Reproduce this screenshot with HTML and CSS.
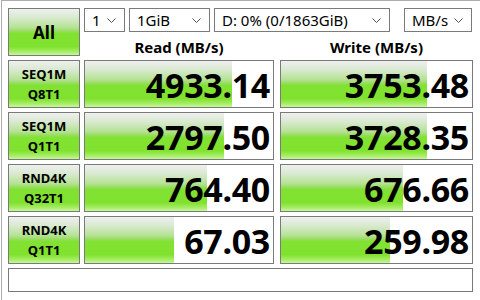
FILE: index.html
```
<!DOCTYPE html>
<html>
<head>
<meta charset="utf-8">
<link rel="stylesheet" href="styles.css">
</head>
<body>
<div class="app">
  <button class="btn all">All</button>
  <div class="toolbar">
    <div class="select w-count"><span>1</span><svg class="chev" width="9" height="5" viewBox="0 0 9 5"><path d="M0.5 0.5 L4.5 4.5 L8.5 0.5" fill="none" stroke="#505050" stroke-width="1"/></svg></div>
    <div class="select w-size"><span>1GiB</span><svg class="chev" width="9" height="5" viewBox="0 0 9 5"><path d="M0.5 0.5 L4.5 4.5 L8.5 0.5" fill="none" stroke="#505050" stroke-width="1"/></svg></div>
    <div class="select w-drive"><span>D: 0% (0/1863GiB)</span><svg class="chev" width="9" height="5" viewBox="0 0 9 5"><path d="M0.5 0.5 L4.5 4.5 L8.5 0.5" fill="none" stroke="#505050" stroke-width="1"/></svg></div>
    <div class="select w-unit"><span>MB/s</span><svg class="chev" width="9" height="5" viewBox="0 0 9 5"><path d="M0.5 0.5 L4.5 4.5 L8.5 0.5" fill="none" stroke="#505050" stroke-width="1"/></svg></div>
  </div>
  <div class="head">Read (MB/s)</div>
  <div class="head write">Write (MB/s)</div>

  <button class="btn label">SEQ1M<br>Q8T1</button>
  <div class="meter"><div class="fill" style="width:78.2%"></div><span class="val">4933.14</span></div>
  <div class="meter write"><div class="fill" style="width:76.2%"></div><span class="val">3753.48</span></div>

  <button class="btn label">SEQ1M<br>Q1T1</button>
  <div class="meter"><div class="fill" style="width:74.1%"></div><span class="val">2797.50</span></div>
  <div class="meter write"><div class="fill" style="width:76.2%"></div><span class="val">3728.35</span></div>

  <button class="btn label">RND4K<br>Q32T1</button>
  <div class="meter"><div class="fill" style="width:64.7%"></div><span class="val">764.40</span></div>
  <div class="meter write"><div class="fill" style="width:63.8%"></div><span class="val">676.66</span></div>

  <button class="btn label">RND4K<br>Q1T1</button>
  <div class="meter"><div class="fill" style="width:47.1%"></div><span class="val">67.03</span></div>
  <div class="meter write"><div class="fill" style="width:56.9%"></div><span class="val">259.98</span></div>

  <div class="status"></div>
</div>
</body>
</html>
```
FILE: styles.css
```
html, body {
  margin: 0;
  padding: 0;
  background: #ffffff;
}
body {
  width: 478px;
  height: 299px;
  margin-left: 1px;
  border-top: 1px solid #acacac;
  border-left: 1px solid #acacac;
  font-family: "Noto Sans", "Open Sans", sans-serif;
  color: #000;
}
.app {
  padding: 7px 0 0 6px;
  display: grid;
  grid-template-columns: 72px 190px 195px;
  grid-template-rows: 24px 20px 48px 48px 48px 48px 24px;
  column-gap: 4px;
  row-gap: 4px;
}
.btn {
  margin: 0;
  padding: 0;
  border: 1px solid #7a7a7a;
  background: linear-gradient(to bottom, #eef0ee 0%, #dbe9d2 18%, #b6e394 40%, #96dc5c 49%, #82e232 53%, #80e22e 82%, #a4ec62 92%, #c6f69a 100%);
  font-family: "Noto Sans", "Open Sans", sans-serif;
  font-weight: bold;
  color: #000;
  box-sizing: border-box;
}
.all {
  grid-row: 1 / 3;
  grid-column: 1;
  font-size: 17px;
}
.label {
  font-size: 13px;
  line-height: 20px;
}
.toolbar {
  grid-column: 2 / 4;
  grid-row: 1;
  display: flex;
  gap: 4px;
}
.select {
  height: 24px;
  box-sizing: border-box;
  border: 1px solid #7a7a7a;
  background: #fff;
  display: flex;
  align-items: center;
  justify-content: space-between;
  padding: 0 8px 0 7px;
  font-size: 15px;
}
.chev {
  display: block;
}
.w-count { width: 41px; }
.w-size { width: 81px; }
.w-drive { width: 176px; }
.w-unit { width: 68px; margin-left: auto; margin-right: 1px; }
.head {
  grid-row: 2;
  text-align: center;
  font-weight: bold;
  font-size: 15px;
  line-height: 22px;
}
.write {
  margin-left: 2px;
}
.meter {
  position: relative;
  border: 1px solid #7a7a7a;
  background: #fff;
  box-sizing: border-box;
  overflow: hidden;
  display: flex;
  align-items: center;
  justify-content: flex-end;
}
.fill {
  position: absolute;
  left: 0;
  top: 0;
  bottom: 0;
  background: linear-gradient(to bottom, #eef0ee 0%, #dbe9d2 18%, #b6e394 40%, #96dc5c 49%, #82e232 53%, #80e22e 82%, #a4ec62 92%, #c6f69a 100%);
}
.val {
  position: relative;
  font-weight: bold;
  font-size: 34px;
  line-height: 46px;
  padding-right: 3px;
  padding-top: 2px;
  letter-spacing: -0.3px;
}
.status {
  grid-column: 1 / 4;
  border: 1px solid #7a7a7a;
  background: #fff;
}
```
